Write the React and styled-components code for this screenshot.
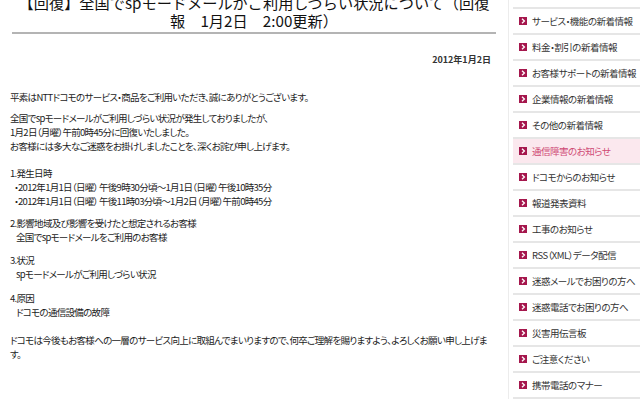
import React from "react";
import styled, { createGlobalStyle } from "styled-components";

const GlobalStyle = createGlobalStyle`
  html, body {
    margin: 0;
    padding: 0;
    background: #fff;
  }
  body {
    font-family: "Noto Sans CJK JP", "Noto Sans", sans-serif;
    color: #222;
  }
`;

const Viewport = styled.div`
  width: 640px;
  height: 400px;
  overflow: hidden;
`;

// the page is scrolled down a little in the reference
const Page = styled.div`
  display: flex;
  align-items: flex-start;
  margin-top: -15px;
`;

const Main = styled.div`
  width: 508px;
  box-sizing: border-box;
  padding: 8px 12px 0 10px;
  flex-shrink: 0;
`;

const Title = styled.h1`
  margin: 0 0 0 2px;
  padding-bottom: 3px;
  font-size: 15.2px;
  line-height: 18px;
  font-weight: normal;
  text-align: center;
  color: #111;
  border-bottom: 2px solid #b4b4b4;
  white-space: nowrap;
`;

const DateLine = styled.div`
  margin-top: 19px;
  text-align: right;
  font-size: 9px;
  font-weight: bold;
  color: #333;
  padding-right: 5px;
`;

const Body = styled.div`
  margin-top: 24px;
  font-size: 9.5px;
  letter-spacing: -0.7px;
  line-height: 14px;
  font-feature-settings: "palt";
  color: #1c1c1c;
`;

const Para = styled.p`
  margin: 0 0 ${(p) => p.$gap || 13}px 0;
  white-space: nowrap;
`;

const Indent = styled.span`
  display: block;
  padding-left: ${(p) => p.$pad || 6}px;
`;

const Sidebar = styled.ul`
  list-style: none;
  margin: -2px 0 0 0;
  padding: 0 0 0 4px;
  flex: 1;
  border-left: 1px solid #ececec;
  font-size: 9.5px;
  letter-spacing: -0.5px;
  font-feature-settings: "palt";
`;

const Item = styled.li`
  display: flex;
  align-items: center;
  gap: 5px;
  height: 24px;
  padding-left: 6px;
  border-bottom: 2px solid #e6e6e6;
  background: ${(p) => (p.$active ? "#fbe8ee" : "#fff")};
  color: ${(p) => (p.$active ? "#cf4a75" : "#333")};
  white-space: nowrap;
`;

const Bullet = () => (
  <svg width="8" height="8" viewBox="0 0 8 8">
    <rect width="8" height="8" fill="#a5174d" />
    <path d="M3 1.8 L5.4 4 L3 6.2" stroke="#fff" strokeWidth="1.3" fill="none" />
  </svg>
);

const menu = [
  "トピックス",
  "サービス・機能の新着情報",
  "料金・割引の新着情報",
  "お客様サポートの新着情報",
  "企業情報の新着情報",
  "その他の新着情報",
  "通信障害のお知らせ",
  "ドコモからのお知らせ",
  "報道発表資料",
  "工事のお知らせ",
  "RSS（XML）データ配信",
  "迷惑メールでお困りの方へ",
  "迷惑電話でお困りの方へ",
  "災害用伝言板",
  "ご注意ください",
  "携帯電話のマナー",
];

export default function App() {
  return (
    <>
      <GlobalStyle />
      <Viewport>
        <Page>
          <Main>
            <Title>
              【回復】全国でspモードメールがご利用しづらい状況について（回復
              <br />
              報　1月2日　2:00更新）
            </Title>
            <DateLine>2012年1月2日</DateLine>
            <Body>
              <Para $gap={7}>平素はNTTドコモのサービス・商品をご利用いただき、誠にありがとうございます。</Para>
              <Para>
                全国でspモードメールがご利用しづらい状況が発生しておりましたが、
                <br />
                1月2日（月曜）午前0時45分に回復いたしました。
                <br />
                お客様には多大なご迷惑をお掛けしましたことを、深くお詫び申し上げます。
              </Para>
              <Para $gap={8}>
                1.発生日時
                <Indent $pad={4}>・2012年1月1日（日曜） 午後9時30分頃～1月1日（日曜）午後10時35分</Indent>
                <Indent $pad={4}>・2012年1月1日（日曜） 午後11時03分頃～1月2日（月曜）午前0時45分</Indent>
              </Para>
              <Para $gap={9}>
                2.影響地域及び影響を受けたと想定されるお客様
                <Indent>全国でspモードメールをご利用のお客様</Indent>
              </Para>
              <Para $gap={10}>
                3.状況
                <Indent>spモードメールがご利用しづらい状況</Indent>
              </Para>
              <Para $gap={14}>
                4.原因
                <Indent>ドコモの通信設備の故障</Indent>
              </Para>
              <Para>
                ドコモは今後もお客様への一層のサービス向上に取組んでまいりますので、何卒ご理解を賜りますよう、よろしくお願い申し上げま
                <br />
                す。
              </Para>
            </Body>
          </Main>
          <Sidebar>
            {menu.map((m) => (
              <Item key={m} $active={m === "通信障害のお知らせ"}>
                <Bullet />
                {m}
              </Item>
            ))}
          </Sidebar>
        </Page>
      </Viewport>
    </>
  );
}
